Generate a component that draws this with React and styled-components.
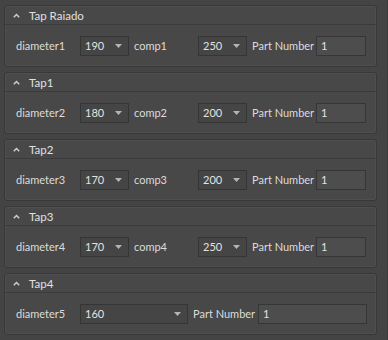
import React from "react";
import styled, { createGlobalStyle } from "styled-components";

const GlobalStyle = createGlobalStyle`
  html, body {
    margin: 0;
    padding: 0;
    background: #444444;
  }
  body {
    font-family: Lato, "Liberation Sans", sans-serif;
    font-size: 11px;
    color: #dcdcdc;
  }
`;

const Rollout = styled.div`
  width: 388px;
  height: 340px;
  box-sizing: border-box;
  padding: 5px 10px 0 4px;
  border-right: 1px solid #3a3a3a;
  display: flex;
  flex-direction: column;
  gap: 5px;
  overflow: hidden;
`;

const Group = styled.section`
  border: 1px solid #383838;
  border-radius: 3px;
  background: #484848;
  box-shadow: inset 0 0 0 1px #4f4f4f;
`;

const Header = styled.div`
  height: 18px;
  display: flex;
  align-items: center;
  gap: 6px;
  padding-left: 8px;
  border-bottom: 1px solid #3c3c3c;
  color: #e0e0e0;
  font-size: 11.5px;
`;

const Chevron = styled.svg`
  width: 7px;
  height: 5px;
  margin-right: 3px;
`;

const Body = styled.div`
  height: 41px;
  display: flex;
  align-items: center;
  padding-left: 11px;
`;

const Label = styled.span`
  width: ${(p) => p.$w}px;
  flex: none;
  white-space: nowrap;
  color: #dcdcdc;
`;

const Combo = styled.div`
  width: ${(p) => p.$w}px;
  height: 20px;
  box-sizing: border-box;
  flex: none;
  display: flex;
  align-items: center;
  justify-content: space-between;
  padding: 0 6px 0 4px;
  background: #454545;
  border: 1px solid #353535;
  color: #e2e2e2;
  margin-right: 5px;
`;

const Arrow = styled.svg`
  width: 7px;
  height: 4px;
`;

const Field = styled.div`
  width: ${(p) => p.$w}px;
  height: 20px;
  box-sizing: border-box;
  flex: none;
  display: flex;
  align-items: center;
  padding-left: 4px;
  background: #4d4d4d;
  border: 1px solid #363636;
  color: #e2e2e2;
`;

const Select = ({ value, w }) => (
  <Combo $w={w}>
    <span>{value}</span>
    <Arrow viewBox="0 0 7 4">
      <path d="M0 0h7L3.5 4z" fill="#b4b4b4" />
    </Arrow>
  </Combo>
);

const rows = [
  { title: "Tap Raiado", d: "diameter1", dv: "190", c: "comp1", cv: "250" },
  { title: "Tap1", d: "diameter2", dv: "180", c: "comp2", cv: "200" },
  { title: "Tap2", d: "diameter3", dv: "170", c: "comp3", cv: "200" },
  { title: "Tap3", d: "diameter4", dv: "170", c: "comp4", cv: "250" },
  { title: "Tap4", d: "diameter5", dv: "160" },
];

export default function App() {
  return (
    <>
      <GlobalStyle />
      <Rollout>
        {rows.map((r) => (
          <Group key={r.title}>
            <Header>
              <Chevron viewBox="0 0 7 5">
                <path d="M0.8 4.2L3.5 1.4 6.2 4.2" fill="none" stroke="#d0d0d0" strokeWidth="1.4" />
              </Chevron>
              {r.title}
            </Header>
            <Body>
              <Label $w={64}>{r.d}</Label>
              {r.c ? (
                <>
                  <Select value={r.dv} w={49} />
                  <Label $w={64}>{r.c}</Label>
                  <Select value={r.cv} w={49} />
                  <Label $w={64}>Part Number</Label>
                  <Field $w={50}>1</Field>
                </>
              ) : (
                <>
                  <Select value={r.dv} w={108} />
                  <Label $w={65}>Part Number</Label>
                  <Field $w={109}>1</Field>
                </>
              )}
            </Body>
          </Group>
        ))}
      </Rollout>
    </>
  );
}
